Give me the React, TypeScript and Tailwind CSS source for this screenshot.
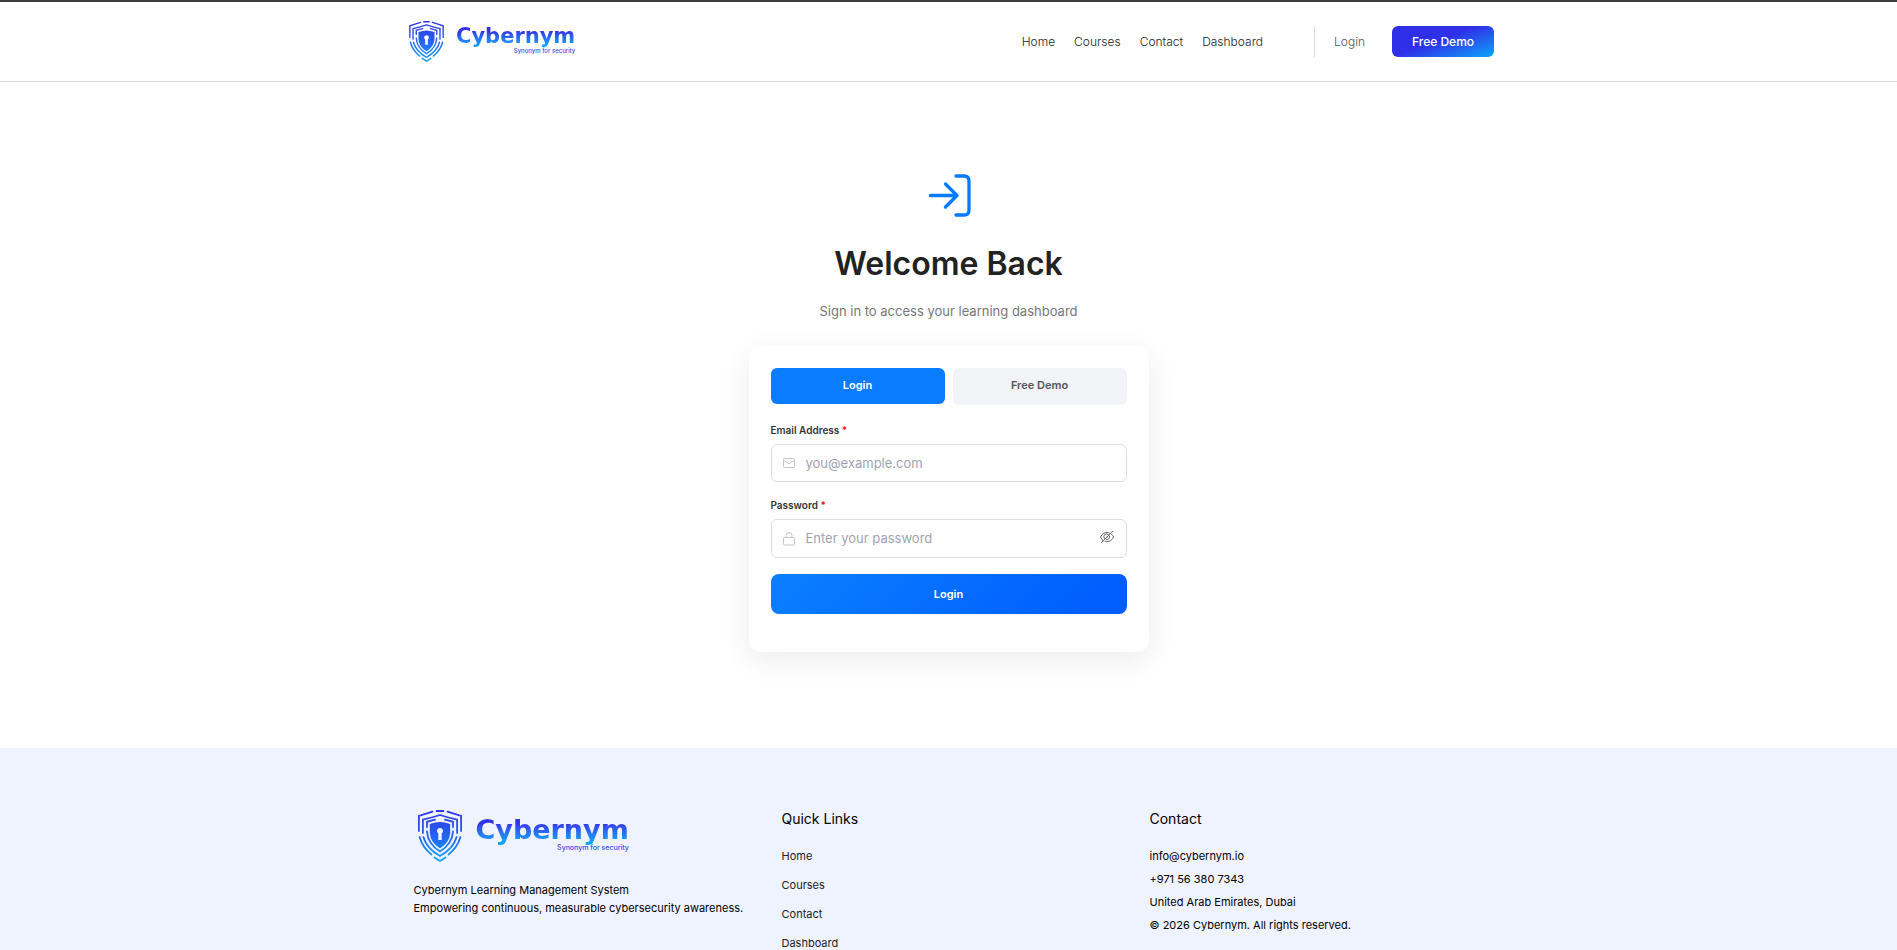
import { useId, useState } from "react";

const NAV_LINKS = ["Home", "Courses", "Contact", "Dashboard"];

function Shield({ className }: { className: string }) {
  const id = useId();
  const stroke = `url(#${id})`;
  return (
    <svg viewBox="0 0 44 52" className={className} fill="none" aria-hidden="true">
      <defs>
        <linearGradient id={id} gradientUnits="userSpaceOnUse" x1="0" y1="0" x2="0" y2="52">
          <stop offset="0" stopColor="#3333e6" />
          <stop offset="0.5" stopColor="#2563f0" />
          <stop offset="1" stopColor="#12a8fb" />
        </linearGradient>
      </defs>
      <g stroke={stroke} strokeWidth="1.8" strokeLinecap="round">
        <path d="M.9 21V6L14.5 1.7M43.1 21V6L29.5 1.7M18.6 1h6.8" />
        <path d="M4.9 23V9.6Q14 7.6 22 5Q30 7.6 39.1 9.6V23" />
        <path d="M9 17V11.8L17 9.6M35 17V11.8L27 9.6" />
        <path d="M9 21.5Q9.8 34 22 41.5Q34.2 34 35 21.5" />
        <path d="M5.4 27Q8.6 38.5 22 46Q35.4 38.5 38.6 27" />
        <path d="M1.6 27Q4.4 37.5 13.5 44.5M42.4 27Q39.6 37.5 30.5 44.5" />
        <path d="M16.5 47.5L22 51L27.5 47.5" />
      </g>
      <path
        fillRule="evenodd"
        fill={stroke}
        d="M22 12Q27 12 32.2 14V23Q31.5 32.5 22 38.5Q12.5 32.5 11.8 23V14Q17 12 22 12ZM22 18a3 3 0 0 0-1.7 5.5V30h3.4v-6.500A3 3 0 0 0 22 18Z"
      />
    </svg>
  );
}

function HeaderLogo() {
  return (
    <a href="#" className="flex items-center gap-3 pl-1.5">
      <Shield className="h-[41px] w-[35px]" />
      <span className="flex flex-col items-end pb-1">
        <span className="bg-gradient-to-b from-[#3333e6] from-30% to-[#10a8ff] to-90% bg-clip-text font-['DejaVu_Sans'] text-[21px] leading-[25px] font-bold text-transparent">
          Cybernym
        </span>
        <span className="-mt-0.5 font-['Inter'] text-[6px] leading-2 font-medium text-[#3350e8]">Synonym for security</span>
      </span>
    </a>
  );
}

function FooterLogo() {
  return (
    <a href="#" className="flex items-center gap-3.5 pl-1">
      <Shield className="h-[52px] w-[44px]" />
      <span className="flex flex-col items-end pb-1.5">
        <span className="bg-gradient-to-b from-[#3333e6] from-30% to-[#10a8ff] to-90% bg-clip-text font-['DejaVu_Sans'] text-[27px] leading-8 font-bold text-transparent">
          Cybernym
        </span>
        <span className="-mt-0.5 font-['Inter'] text-[7px] leading-2 font-medium text-[#3350e8]">Synonym for security</span>
      </span>
    </a>
  );
}

function Required() {
  return <span className="text-[#e5141e]"> *</span>;
}

export default function App() {
  const [visible, setVisible] = useState(false);

  return (
    <div className="min-h-screen bg-white font-['Inter',sans-serif] text-[#222]">
      <header className="border-t-2 border-b border-t-[#3c3c3c] border-b-[#dcdcdc]">
        <div className="mx-auto flex h-[79px] max-w-[1091px] items-center justify-between">
          <HeaderLogo />
          <div className="flex items-center">
            <nav className="flex gap-[19px] text-xs font-light text-[#222]">
              {NAV_LINKS.map((label) => (
                <a key={label} href="#">{label}</a>
              ))}
            </nav>
            <div className="ml-[51px] flex h-[31px] items-center border-l border-[#dcdcdc] pl-[19px]">
              <a href="#" className="text-xs font-light text-[#555]">Login</a>
            </div>
            <a
              href="#"
              className="ml-[27px] flex h-[31px] w-[102px] items-center justify-center rounded-md bg-[linear-gradient(160deg,#2f2fe8_45%,#0ea5fa_100%)] text-xs font-medium text-white"
            >
              Free Demo
            </a>
          </div>
        </div>
      </header>

      <main className="flex flex-col items-center px-4 pt-[89px] pb-24">
        <svg
          viewBox="0 0 48 48"
          className="size-12"
          fill="none"
          stroke="#007bff"
          strokeWidth="3.300"
          strokeLinecap="round"
          strokeLinejoin="round"
          aria-hidden="true"
        >
          <path d="M5.500 24.500H31.500M20.500 13L32 24.500L20.500 36M31 5H39Q44 5 44 10V39Q44 44 39 44H31" />
        </svg>
        <h1 className="mt-[25px] text-[32px] leading-10 font-semibold text-[#222]">Welcome Back</h1>
        <p className="mt-[17px] text-[13px] leading-5 text-[#777]">Sign in to access your learning dashboard</p>

        <section className="mt-[25px] w-full max-w-[400px] rounded-xl bg-white px-[22px] pt-[22px] pb-[38px] shadow-[0_8px_30px_rgba(0,0,0,0.08)]">
          <div className="grid grid-cols-2 gap-2 text-[11px] font-semibold">
            <button type="button" className="h-9 rounded-md bg-[#0a7cff] pb-0.5 text-white">Login</button>
            <button type="button" className="h-[37px] rounded-md bg-[#f1f3f7] pb-0.5 text-[#555]">Free Demo</button>
          </div>
          <form onSubmit={(e) => e.preventDefault()}>
            <label htmlFor="email" className="mt-[17px] block text-[10px] leading-4 font-semibold text-[#333]">
              Email Address<Required />
            </label>
            <div className="mt-1.5 flex h-[38px] items-center gap-[11px] rounded-md border border-[#dcdee6] px-[11px]">
              <svg viewBox="0 0 12 12" className="size-3 shrink-0" fill="none" stroke="#c4c4c4" aria-hidden="true">
                <rect x=".5" y="1.500" width="11" height="9" rx="1" />
                <path d="M1 3.500L6 6.700L11 3.500" />
              </svg>
              <input
                id="email"
                type="email"
                placeholder="you@example.com"
                className="min-w-0 flex-1 bg-transparent pt-0.5 text-[13px] outline-none placeholder:text-[#9fa3b1]"
              />
            </div>
            <label htmlFor="password" className="mt-[15px] block text-[10px] leading-4 font-semibold text-[#333]">
              Password<Required />
            </label>
            <div className="mt-1.5 flex h-[39px] items-center gap-[11px] rounded-md border border-[#dcdee6] px-[11px]">
              <svg viewBox="0 0 12 14" className="h-3.5 w-3 shrink-0" fill="none" stroke="#c4c4c4" aria-hidden="true">
                <rect x=".5" y="5.500" width="11" height="7.500" rx="1" />
                <path d="M3 5.500V3.500a3 3 0 0 1 6 0V5.500" />
              </svg>
              <input
                id="password"
                type={visible ? "text" : "password"}
                placeholder="Enter your password"
                className="min-w-0 flex-1 bg-transparent text-[13px] outline-none placeholder:text-[#9fa3b1]"
              />
              <button
                type="button"
                aria-label="Toggle password visibility"
                onClick={() => setVisible(!visible)}
                className="pb-1"
              >
                <svg viewBox="0 0 16 14" className="h-3.5 w-4" fill="none" stroke="#666" strokeLinecap="round" aria-hidden="true">
                  <path d="M5 11.200Q2.500 10 1.500 7Q3.500 2.500 8 2.500Q9.500 2.500 10.500 3M12.300 4Q13.800 5.200 14.500 7Q12.500 11.500 8 11.500Q7.200 11.500 6.500 11.300" />
                  <path d="M5.700 8.700A2.700 2.700 0 0 1 9.500 4.700M10.500 6A2.700 2.700 0 0 1 7.300 9.500M2.300 12.600L13.700 1.200M7 8.300L9.200 6" />
                </svg>
              </button>
            </div>
            <button
              type="submit"
              className="mt-4 h-10 w-full rounded-lg bg-[linear-gradient(135deg,#0a7cff_10%,#005eff_90%)] text-[11px] font-semibold text-white"
            >
              Login
            </button>
          </form>
        </section>
      </main>

      <footer className="bg-[#eff3ff] px-4 pt-[62px] pb-16 text-black">
        <div className="mx-auto grid max-w-[1070px] grid-cols-3 gap-[34px]">
          <div>
            <FooterLogo />
            <p className="mt-[19px] text-[11px] leading-[18px] whitespace-nowrap">
              Cybernym Learning Management System
              <br />
              Empowering continuous, measurable cybersecurity awareness.
            </p>
          </div>
          <div>
            <h2 className="pt-px text-sm leading-4">Quick Links</h2>
            <ul className="mt-[15px] text-[11px] leading-[29px] text-[#222]">
              {NAV_LINKS.map((label) => (
                <li key={label}>
                  <a href="#">{label}</a>
                </li>
              ))}
            </ul>
          </div>
          <div>
            <h2 className="pt-px text-sm leading-4">Contact</h2>
            <address className="mt-[18px] text-[11px] leading-[23px] not-italic">
              <p>info@cybernym.io</p>
              <p>+971 56 380 7343</p>
              <p>United Arab Emirates, Dubai</p>
              <p>© 2026 Cybernym. All rights reserved.</p>
            </address>
          </div>
        </div>
      </footer>
    </div>
  );
}
